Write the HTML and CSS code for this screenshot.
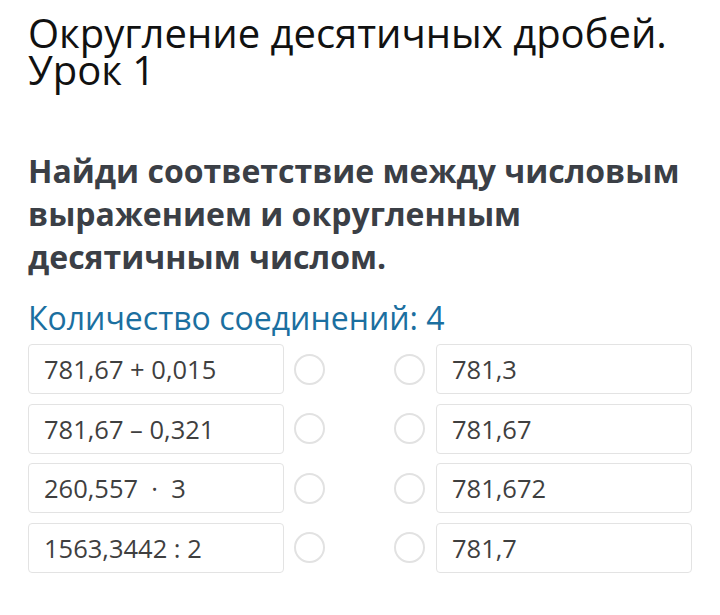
FILE: index.html
```html
<!DOCTYPE html>
<html lang="ru">
<head>
<meta charset="utf-8">
<link rel="stylesheet" href="styles.css">
</head>
<body>
<main class="page">
  <h1 class="title">Округление десятичных дробей. Урок&nbsp;1</h1>
  <p class="question">Найди соответствие между числовым выражением и округленным десятичным числом.</p>
  <p class="count">Количество соединений: 4</p>
  <div class="match">
    <div class="box left">781,67 + 0,015</div><span class="dot left-dot"></span><span class="dot right-dot"></span><div class="box right">781,3</div>
    <div class="box left">781,67 – 0,321</div><span class="dot left-dot"></span><span class="dot right-dot"></span><div class="box right">781,67</div>
    <div class="box left">260,557 &nbsp;·&nbsp; 3</div><span class="dot left-dot"></span><span class="dot right-dot"></span><div class="box right">781,672</div>
    <div class="box left">1563,3442 : 2</div><span class="dot left-dot"></span><span class="dot right-dot"></span><div class="box right">781,7</div>
  </div>
</main>
</body>
</html>
```
FILE: styles.css
```css
html, body {
  margin: 0;
  padding: 0;
  background: #ffffff;
}
.page {
  padding: 14px 28px 0 28px;
  font-family: "Open Sans", "Noto Sans", sans-serif;
  width: 664px;
}
.title {
  margin: 0;
  font-weight: 400;
  font-size: 40px;
  line-height: 37px;
  color: #111111;
  width: 664px;
}
.question {
  margin: 61px 0 0 0;
  font-weight: 700;
  font-size: 32px;
  line-height: 43px;
  color: #3b3f46;
}
.count {
  margin: 22px 0 0 0;
  font-size: 32px;
  line-height: 36px;
  color: #1b6fa0;
}
.match {
  margin-top: 8px;
  display: grid;
  grid-template-columns: 266px 31px 100px 267px;
  row-gap: 9.5px;
  align-items: center;
}
.box {
  box-sizing: border-box;
  width: 256px;
  height: 50px;
  border: 1px solid #e3e3e3;
  border-radius: 4px;
  padding: 0 15px;
  display: flex;
  align-items: center;
  font-size: 25.5px;
  color: #3f3f3f;
}
.box.left {
  justify-self: start;
}
.box.right {
  justify-self: end;
}
.dot {
  box-sizing: border-box;
  display: block;
  width: 31px;
  height: 31px;
  border: 2px solid #e2e2e2;
  border-radius: 50%;
}
.right-dot {
  justify-self: end;
}
```
